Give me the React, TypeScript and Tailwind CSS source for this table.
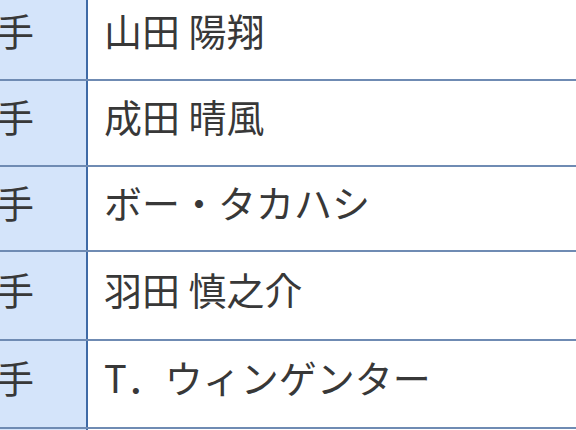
import React from "react";

const rows = [
  { pos: "投手", name: "山田 陽翔", h: "h-[87px]" },
  { pos: "投手", name: "成田 晴風", h: "h-[86px]" },
  { pos: "投手", name: "ボー・タカハシ", h: "h-[85px]" },
  { pos: "投手", name: "羽田 慎之介", h: "h-[89px]" },
  { pos: "投手", name: "T．ウィンゲンター", h: "h-[88px]" },
  { pos: "投手", name: "", h: "h-[60px]" },
];

export default function App() {
  return (
    <div
      className="w-[576px] h-[430px] overflow-hidden bg-white text-[#383838] text-[38px] leading-none font-normal"
      style={{ fontFamily: '"Noto Sans CJK JP", "Noto Sans", sans-serif' }}
    >
      <div className="-mt-[8px] flex flex-col">
        {rows.map((r, i) => (
          <div key={i} className={`flex ${r.h} border-t-2 border-[#6f8bb3]`}>
            <div className="-ml-[56px] w-[144px] shrink-0 flex items-center pb-[14px] pl-[14px] bg-[#d4e4fa] border-r-2 border-[#3f6aa6]">
              {r.pos}
            </div>
            <div className="flex-1 flex items-center pb-[14px] pl-[16px] whitespace-pre">
              {r.name}
            </div>
          </div>
        ))}
      </div>
    </div>
  );
}
